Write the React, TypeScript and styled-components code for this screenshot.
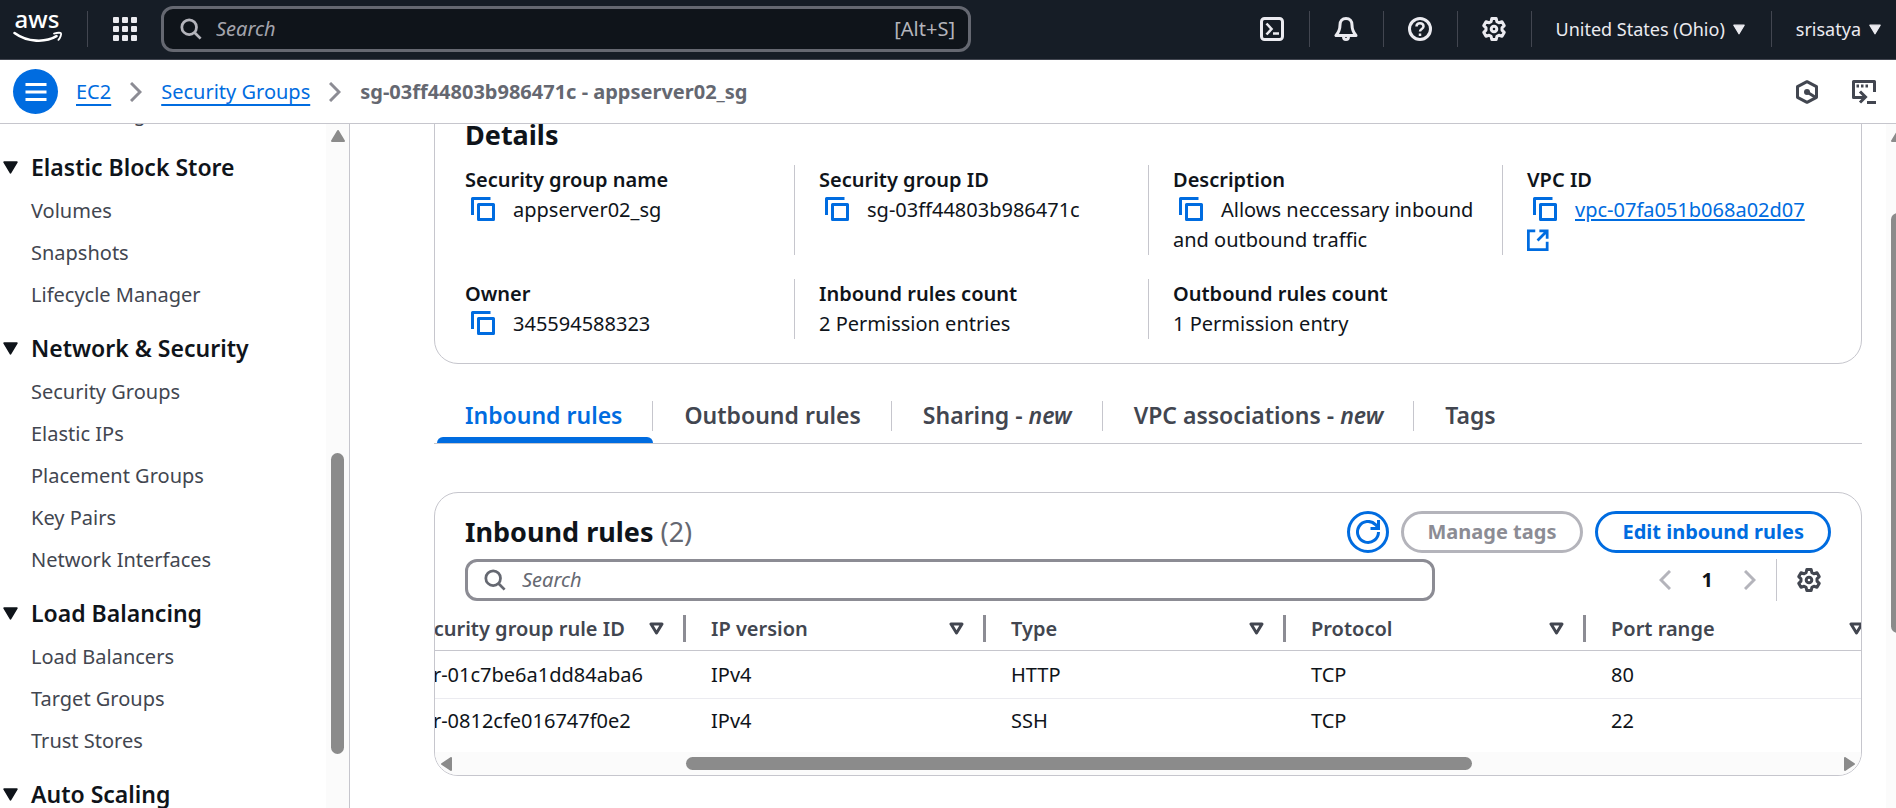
import React from "react";
import styled, { createGlobalStyle } from "styled-components";

const Global = createGlobalStyle`
  * { box-sizing: border-box; }
  html, body, #root { height: 100%; }
  body {
    margin: 0;
    overflow: hidden;
    font-family: "Noto Sans", "Open Sans", sans-serif;
    font-size: 20px;
    line-height: 30px;
    color: #0f141a;
    background: #fff;
  }
  button, input { font: inherit; color: inherit; }
  button { background: none; border: 0; padding: 0; cursor: pointer; }
  h2, h3, ul, dl, dt, dd, p { margin: 0; padding: 0; }
  ul { list-style: none; }
  svg { display: block; flex: none; }
`;

const Page = styled.div`
  display: flex;
  flex-direction: column;
  height: 100%;
`;

/* Global navigation */

const TopNav = styled.header`
  display: flex;
  align-items: center;
  flex: none;
  height: 60px;
  padding: 0 15px 1px 12px;
  background: #161d26;
  border-bottom: 1px solid #424650;
  color: #ebebf0;
  font-size: 18px;
`;

const NavDivider = styled.span`
  flex: none;
  width: 1px;
  height: 36px;
  background: #424650;
`;

const NavButton = styled.button<{ $wide?: boolean }>`
  display: flex;
  align-items: center;
  justify-content: center;
  gap: 8px;
  flex: none;
  height: 48px;
  min-width: ${(p) => (p.$wide ? 0 : 73)}px;
  padding: ${(p) => (p.$wide ? "0 26px 0 24px" : 0)};
  &:last-child { padding-right: 0; }
`;

const LogoLink = styled.a`
  display: block;
  padding-right: 24px;
`;

const NavSearch = styled.label`
  display: flex;
  align-items: center;
  gap: 14px;
  flex: 0 1 810px;
  height: 46px;
  margin-right: auto;
  padding: 0 13px 0 16px;
  border: 3px solid #656871;
  border-radius: 12px;
  background: #0f141a;
  color: #b4b4bb;
  font-size: 20px;
`;

const SearchInput = styled.input<{ $color: string }>`
  flex: 1;
  min-width: 0;
  padding: 0;
  border: 0;
  outline: 0;
  background: none;
  &::placeholder { color: ${(p) => p.$color}; font-style: italic; opacity: 1; }
`;

/* Breadcrumb bar */

const CrumbBar = styled.div`
  display: flex;
  align-items: center;
  flex: none;
  height: 64px;
  padding: 0 20px 0 13px;
  border-bottom: 1px solid #c6c6cd;
  color: #424650;
`;

const MenuButton = styled.button`
  display: flex;
  align-items: center;
  justify-content: center;
  width: 45px;
  height: 45px;
  margin-right: 18px;
  border-radius: 50%;
  background: #006ce0;
  color: #fff;
`;

const Crumbs = styled.nav`
  display: flex;
  align-items: center;
  gap: 19px;
  flex: 1;
  color: #8c8c94;
`;

const Link = styled.a<{ $tight?: boolean }>`
  color: #006ce0;
  text-decoration: underline;
  text-decoration-thickness: 2px;
  text-underline-offset: ${(p) => (p.$tight ? 2 : 5)}px;
`;

const CurrentCrumb = styled.span`
  color: #656871;
  font-weight: 700;
`;

const BarTools = styled.div`
  display: flex;
  gap: 33px;
`;

/* Body */

const Body = styled.div`
  display: flex;
  flex: 1;
  min-height: 0;
`;

const Sidebar = styled.aside`
  display: flex;
  flex: none;
  width: 350px;
  overflow: hidden;
  border-right: 1px solid #c6c6cd;
`;

const SideScroll = styled.nav`
  display: flex;
  flex-direction: column;
  gap: 23px;
  flex: 1;
  min-width: 0;
  margin-top: -25px;
`;

const SideHeading = styled.h3`
  display: flex;
  align-items: center;
  gap: 13px;
  padding-left: 3px;
  font-size: 23px;
  line-height: 30px;
  font-weight: 600;
`;

const SideList = styled.ul`
  display: flex;
  flex-direction: column;
  gap: 12px;
  padding-left: 31px;
  ${SideHeading} + & { margin-top: 14px; }
`;

const SideLink = styled.a`
  color: #424650;
  text-decoration: none;
`;

const VTrack = styled.div<{ $width: number }>`
  display: flex;
  flex-direction: column;
  flex: none;
  width: ${(p) => p.$width}px;
  padding: 6px 0 0 5px;
  overflow: hidden;
  background: #fbfbfb;
`;

const VThumb = styled.div<{ $top: string; $size: string }>`
  flex: none;
  width: 13px;
  height: ${(p) => p.$size};
  margin-top: ${(p) => p.$top};
  border-radius: 7px;
  background: #8b8b8b;
`;

const Main = styled.main`
  flex: 1;
  min-width: 0;
  overflow: hidden;
  padding: 0 24px 0 84px;
`;

const Card = styled.section`
  border: 1px solid #c6c6cd;
  border-radius: 24px;
  overflow: hidden;
`;

const DetailsCard = styled(Card)`
  margin-top: -26px;
  padding: 18px 30px 24px;
`;

const Title = styled.h2`
  font-size: 27px;
  line-height: 36px;
  font-weight: 700;
`;

const Count = styled.span`
  color: #656871;
  font-weight: 400;
`;

const Fields = styled.dl`
  display: grid;
  grid-template-columns: repeat(4, minmax(0, 1fr));
  gap: 24px 25px;
  margin: 12px 0 0 -25px;
`;

const Field = styled.div<{ $first?: boolean }>`
  padding-left: 24px;
  border-left: 1px solid ${(p) => (p.$first ? "transparent" : "#c6c6cd")};
  dt { font-weight: 600; }
`;

const CopyButton = styled.button`
  display: inline-block;
  padding: 0 18px 0 6px;
  color: #006ce0;
  vertical-align: -4px;
  height: 24px;
`;

const ExternalIcon = styled.a`
  display: inline-block;
  color: #006ce0;
  vertical-align: -4px;
  height: 22px;
`;

const TabList = styled.div`
  display: flex;
  align-items: flex-start;
  margin-top: 30px;
  border-bottom: 1px solid #c6c6cd;
`;

const Tab = styled.button<{ $active?: boolean }>`
  display: flex;
  flex-direction: column;
  align-items: stretch;
  height: 49px;
  padding-left: 3px;
  color: ${(p) => (p.$active ? "#006ce0" : "#424650")};
  font-size: 23px;
  font-weight: 600;
  &::after {
    content: "";
    height: 6px;
    margin-top: 6px;
    border-radius: 6px 6px 0 0;
    background: ${(p) => (p.$active ? "#006ce0" : "transparent")};
  }
`;

const TabLabel = styled.span`
  display: block;
  height: 30px;
  margin-top: 7px;
  padding: 0 30px 0 28px;
  line-height: 28px;
  border-right: 1px solid #c6c6cd;
  white-space: pre;
  ${Tab}:last-child & { border-right: 0; }
`;

const RulesCard = styled(Card)`
  margin-top: 48px;
`;

const CardHeader = styled.div`
  display: flex;
  align-items: center;
  gap: 12px;
  padding: 18px 30px 0;
  ${Title} { flex: 1; }
`;

const PillButton = styled.button<{ $round?: boolean }>`
  display: flex;
  align-items: center;
  justify-content: center;
  height: 42px;
  width: ${(p) => (p.$round ? "42px" : "auto")};
  padding: 0 ${(p) => (p.$round ? 0 : 24)}px;
  border: 3px solid #006ce0;
  border-radius: 21px;
  color: #006ce0;
  font-weight: 700;
  &:disabled { border-color: #b4b4bb; color: #8c8c94; }
`;

const FilterRow = styled.div`
  display: flex;
  align-items: center;
  padding: 6px 30px 0;
`;

const TableSearch = styled.label`
  display: flex;
  align-items: center;
  gap: 16px;
  width: 71%;
  height: 42px;
  margin-right: auto;
  padding: 0 16px;
  border: 3px solid #8c8c94;
  border-radius: 12px;
  color: #656871;
`;

const Pager = styled.div`
  display: flex;
  align-items: center;
  gap: 31px;
  height: 42px;
  padding-right: 20px;
  border-right: 1px solid #c6c6cd;
  margin-right: 20px;
  color: #b4b4bb;
  b { color: #0f141a; font-weight: 700; }
`;

const GearButton = styled.button`
  width: 34px;
  color: #424650;
`;

const TableScroll = styled.div`
  overflow: hidden;
`;

const Table = styled.table`
  width: 1500px;
  margin-left: -49px;
  table-layout: fixed;
  border-collapse: separate;
  border-spacing: 0;
`;

const Th = styled.th`
  width: 300px;
  height: 50px;
  padding: 6px 0 0;
  border-bottom: 1px solid #c6c6cd;
  color: #424650;
  font-weight: 600;
  text-align: left;
`;

const ThInner = styled.div`
  display: flex;
  align-items: center;
  justify-content: space-between;
  height: 27px;
  padding: 0 19px 0 25px;
  border-right: 3px solid #8c8c94;
`;

const Td = styled.td<{ $last?: boolean }>`
  height: ${(p) => (p.$last ? 44 : 48)}px;
  padding: 0 25px;
  border-bottom: ${(p) => (p.$last ? "0" : "1px solid #ebebf0")};
`;

const HTrack = styled.div`
  display: flex;
  align-items: center;
  height: 23px;
  margin-top: 9px;
  padding: 0 6px;
  background: #fbfbfb;
`;

const HSpace = styled.div<{ $grow: number }>`
  flex: ${(p) => p.$grow} 0 0;
`;

const HThumb = styled(HSpace)`
  height: 13px;
  border-radius: 7px;
  background: #8b8b8b;
`;

/* Icons */

type IconProps = { size?: number; children: React.ReactNode };
const Icon = ({ size = 24, children }: IconProps) => (
  <svg width={size} height={size} viewBox="0 0 24 24" fill="none" stroke="currentColor" strokeWidth="3" aria-hidden="true">
    {children}
  </svg>
);

const SearchIcon = () => (
  <Icon size={22}>
    <circle cx="10" cy="10" r="8" />
    <path d="M15.8 15.8 22.5 22.5" />
  </Icon>
);

const GearIcon = () => (
  <Icon>
    <path
      strokeLinejoin="round"
      d="M9.8 1.5h4.4l.7 3.1 2 1.1 3.1-.9 2.2 3.8-2.2 2.3v2.2l2.2 2.3-2.2 3.8-3.1-.9-2 1.1-.7 3.1H9.8l-.7-3.1-2-1.1-3.1.9-2.2-3.8L4 13.1v-2.2L1.8 8.6 4 4.8l3.1.9 2-1.1z"
    />
    <circle cx="12" cy="12" r="2.8" />
  </Icon>
);

const CopyIcon = () => (
  <Icon>
    <path d="M19.5 1.5h-18V18" strokeLinejoin="round" />
    <rect x="7.5" y="7.5" width="15" height="15" strokeLinejoin="round" />
  </Icon>
);

const Caret = ({ width = 12, height = 11 }: { width?: number; height?: number }) => (
  <svg width={width} height={height} viewBox="0 0 14 12" fill="currentColor" stroke="currentColor" strokeWidth="1.5" strokeLinejoin="round" aria-hidden="true">
    <path d="M1 1h12L7 11z" />
  </svg>
);

const SortIcon = () => (
  <svg width="15" height="13" viewBox="0 0 15 13" fill="none" stroke="currentColor" strokeWidth="3" strokeLinejoin="round" aria-hidden="true">
    <path d="M2 2h11L7.5 11z" />
  </svg>
);

const Chevron = ({ left }: { left?: boolean }) => (
  <svg width="12" height="20" viewBox="0 0 12 20" fill="none" stroke="currentColor" strokeWidth="3" aria-hidden="true">
    <path d={left ? "M11 1 2 10l9 9" : "m1 1 9 9-9 9"} />
  </svg>
);

const ScrollArrow = ({ d, w, h }: { d: string; w: number; h: number }) => (
  <svg width={w} height={h} viewBox={`0 0 ${w} ${h}`} fill="#8b8b8b" stroke="#8b8b8b" strokeWidth="2" strokeLinejoin="round" aria-hidden="true">
    <path d={d} />
  </svg>
);

const AwsLogo = () => (
  <svg width="51" height="42" viewBox="0 -6 51 42" role="img" aria-label="aws">
    <text x="25" y="14" textAnchor="middle" fontSize="24" fontWeight="500" fill="#fff">aws</text>
    <path d="M2.5 19c13 9.5 31 9.7 42 3.2" fill="none" stroke="#fff" strokeWidth="2.6" strokeLinecap="round" />
    <path d="M42 19.6c3-.9 6.5-1 7-.3s-.6 4.5-2.6 6.600" fill="none" stroke="#fff" strokeWidth="1.8" strokeLinecap="round" strokeLinejoin="round" />
  </svg>
);

/* Data */

const sections = [
  { title: "Elastic Block Store", items: ["Volumes", "Snapshots", "Lifecycle Manager"] },
  { title: "Network & Security", items: ["Security Groups", "Elastic IPs", "Placement Groups", "Key Pairs", "Network Interfaces"] },
  { title: "Load Balancing", items: ["Load Balancers", "Target Groups", "Trust Stores"] },
  { title: "Auto Scaling", items: [] },
];

const columns = ["Security group rule ID", "IP version", "Type", "Protocol", "Port range"];

const rules = [
  ["sgr-01c7be6a1dd84aba6", "IPv4", "HTTP", "TCP", "80"],
  ["sgr-0812cfe016747f0e2", "IPv4", "SSH", "TCP", "22"],
];

const Copy = () => (
  <CopyButton aria-label="Copy">
    <CopyIcon />
  </CopyButton>
);

export default function App() {
  return (
    <Page>
      <Global />
      <TopNav>
        <LogoLink href="#" aria-label="AWS home">
          <AwsLogo />
        </LogoLink>
        <NavDivider />
        <NavButton aria-label="Services">
          <svg width="24" height="24" viewBox="0 0 24 24" fill="currentColor" aria-hidden="true">
            {[0, 9, 18].map((y) => [0, 9, 18].map((x) => <rect key={`${x}-${y}`} x={x} y={y} width="6" height="6" rx="1" />))}
          </svg>
        </NavButton>
        <NavSearch>
          <SearchIcon />
          <SearchInput type="search" placeholder="Search" aria-label="Search services" $color="#a4a4ad" />
          <span>[Alt+S]</span>
        </NavSearch>
        <NavButton aria-label="CloudShell">
          <Icon>
            <rect x="1.5" y="1.5" width="21" height="21" rx="3" />
            <path d="m6.5 6.5 5 5.5-5 5.5M13 16.5h6" strokeWidth="2.6" />
          </Icon>
        </NavButton>
        <NavDivider />
        <NavButton aria-label="Notifications">
          <Icon>
            <path d="M12 1.5c-3.800 0-6 2.800-6 6.500 0 5-1.200 7.200-4 10.500h20c-2.800-3.300-4-5.500-4-10.500 0-3.700-2.200-6.500-6-6.500z" strokeLinejoin="round" />
            <path d="M9.5 19.5c0 4 5 4 5 0" />
          </Icon>
        </NavButton>
        <NavDivider />
        <NavButton aria-label="Help">
          <Icon>
            <circle cx="12" cy="12" r="10.5" />
            <path d="M8.5 9.5c0-4.500 7-4.500 7 0 0 2.500-3.500 2.500-3.500 5M12 16.500v2.500" strokeWidth="2.5" />
          </Icon>
        </NavButton>
        <NavDivider />
        <NavButton aria-label="Settings">
          <GearIcon />
        </NavButton>
        <NavDivider />
        <NavButton $wide>
          United States (Ohio) <Caret />
        </NavButton>
        <NavDivider />
        <NavButton $wide>
          srisatya <Caret />
        </NavButton>
      </TopNav>

      <CrumbBar>
        <MenuButton aria-label="Toggle navigation">
          <Icon>
            <path d="M1.5 4.5h21M1.5 12h21M1.5 19.5h21" />
          </Icon>
        </MenuButton>
        <Crumbs aria-label="Breadcrumbs">
          <Link href="#">EC2</Link>
          <Chevron />
          <Link href="#">Security Groups</Link>
          <Chevron />
          <CurrentCrumb>sg-03ff44803b986471c - appserver02_sg</CurrentCrumb>
        </Crumbs>
        <BarTools>
          <button aria-label="Amazon Q">
            <Icon>
              <path d="M12 1.7 21.5 6.7v10.6L12 22.3l-9.5-5V6.700z" strokeLinejoin="round" />
              <path d="m12 12 8 5" />
              <circle cx="12" cy="12" r="3" fill="currentColor" stroke="none" />
            </Icon>
          </button>
          <button aria-label="Open shell">
            <Icon>
              <path d="M22.5 12V1.5h-21v16H13" strokeLinejoin="round" />
              <path d="m8 11.500 5.500 5.500L8 22.500" />
              <path d="M15 22.500h9" />
              <path d="M4.500 6h2.500M9 6h2.500M13.500 6h2.500" />
            </Icon>
          </button>
        </BarTools>
      </CrumbBar>

      <Body>
        <Sidebar>
          <SideScroll aria-label="EC2">
            <SideList>
              <li>
                <SideLink href="#">AMI Catalog</SideLink>
              </li>
            </SideList>
            {sections.map((s) => (
              <section key={s.title}>
                <SideHeading>
                  <Caret width={15} height={13} />
                  {s.title}
                </SideHeading>
                <SideList>
                  {s.items.map((i) => (
                    <li key={i}>
                      <SideLink href="#">{i}</SideLink>
                    </li>
                  ))}
                </SideList>
              </section>
            ))}
          </SideScroll>
          <VTrack $width={23}>
            <ScrollArrow w={14} h={12} d="M1 11h12L7 1z" />
            <VThumb $top="311px" $size="301px" />
          </VTrack>
        </Sidebar>

        <Main>
          <DetailsCard>
            <Title>Details</Title>
            <Fields>
              <Field $first>
                <dt>Security group name</dt>
                <dd><Copy />appserver02_sg</dd>
              </Field>
              <Field>
                <dt>Security group ID</dt>
                <dd><Copy />sg-03ff44803b986471c</dd>
              </Field>
              <Field>
                <dt>Description</dt>
                <dd><Copy />Allows neccessary inbound and outbound traffic</dd>
              </Field>
              <Field>
                <dt>VPC ID</dt>
                <dd>
                  <Copy />
                  <Link href="#" $tight>vpc-07fa051b068a02d07</Link>{" "}
                  <ExternalIcon href="#" aria-label="Open VPC in a new tab">
                    <Icon size={22}>
                      <path d="M9 2H1.5v20.5H22V14M13.5 2H22v8.5M21.5 2.5l-10 10" />
                    </Icon>
                  </ExternalIcon>
                </dd>
              </Field>
              <Field $first>
                <dt>Owner</dt>
                <dd><Copy />345594588323</dd>
              </Field>
              <Field>
                <dt>Inbound rules count</dt>
                <dd>2 Permission entries</dd>
              </Field>
              <Field>
                <dt>Outbound rules count</dt>
                <dd>1 Permission entry</dd>
              </Field>
            </Fields>
          </DetailsCard>

          <TabList role="tablist">
            <Tab role="tab" aria-selected="true" $active><TabLabel>Inbound rules</TabLabel></Tab>
            <Tab role="tab"><TabLabel>Outbound rules</TabLabel></Tab>
            <Tab role="tab"><TabLabel>Sharing - <i>new</i></TabLabel></Tab>
            <Tab role="tab"><TabLabel>VPC associations - <i>new</i></TabLabel></Tab>
            <Tab role="tab"><TabLabel>Tags</TabLabel></Tab>
          </TabList>

          <RulesCard>
            <CardHeader>
              <Title>Inbound rules <Count>(2)</Count></Title>
              <PillButton $round aria-label="Refresh">
                <Icon>
                  <path d="M22.5 12a10.5 10.5 0 1 1-3-7.4L22 7.5" />
                  <path d="M22.5 0v8.5h-8" />
                </Icon>
              </PillButton>
              <PillButton disabled>Manage tags</PillButton>
              <PillButton>Edit inbound rules</PillButton>
            </CardHeader>
            <FilterRow>
              <TableSearch>
                <SearchIcon />
                <SearchInput type="search" placeholder="Search" aria-label="Search rules" $color="#656871" />
              </TableSearch>
              <Pager>
                <button aria-label="Previous page" disabled><Chevron left /></button>
                <b>1</b>
                <button aria-label="Next page" disabled><Chevron /></button>
              </Pager>
              <GearButton aria-label="Preferences"><GearIcon /></GearButton>
            </FilterRow>
            <TableScroll>
              <Table>
                <thead>
                  <tr>
                    {columns.map((c) => (
                      <Th key={c} scope="col"><ThInner>{c}<SortIcon /></ThInner></Th>
                    ))}
                  </tr>
                </thead>
                <tbody>
                  {rules.map((r, n) => (
                    <tr key={r[0]}>
                      {r.map((v, i) => <Td key={i} $last={n === rules.length - 1}>{v}</Td>)}
                    </tr>
                  ))}
                </tbody>
              </Table>
            </TableScroll>
            <HTrack>
              <ScrollArrow w={11} h={14} d="M10 1v12L1 7z" />
              <HSpace $grow={234} />
              <HThumb $grow={786} />
              <HSpace $grow={372} />
              <ScrollArrow w={11} h={14} d="M1 1v12l9-6z" />
            </HTrack>
          </RulesCard>
        </Main>
        <VTrack $width={10}>
          <ScrollArrow w={14} h={12} d="M1 11h12L7 1z" />
          <VThumb $top="71px" $size="420px" />
        </VTrack>
      </Body>
    </Page>
  );
}
